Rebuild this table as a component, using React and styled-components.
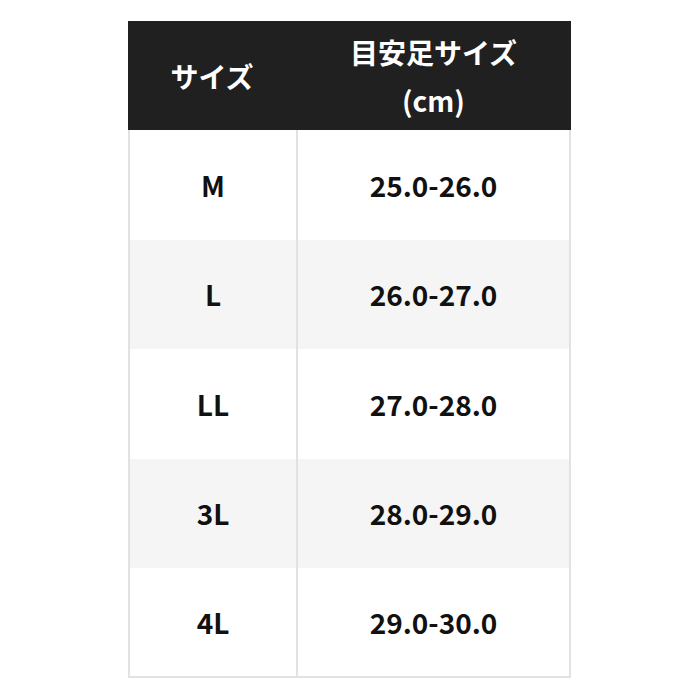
import React from "react";
import styled, { createGlobalStyle } from "styled-components";

const GlobalStyle = createGlobalStyle`
  html, body {
    margin: 0;
    padding: 0;
    background: #ffffff;
  }
  body {
    font-family: "Noto Sans CJK JP", "Noto Sans", sans-serif;
  }
`;

const Page = styled.div`
  width: 700px;
  height: 700px;
  display: flex;
  justify-content: flex-start;
  padding: 21px 0 0 128px;
  box-sizing: border-box;
`;

const Table = styled.div`
  width: 443px;
  display: grid;
  grid-template-columns: 168px 1fr;
  grid-template-rows: 109px;
  grid-auto-rows: 109.5px;
`;

const HeadCell = styled.div`
  background-color: #202020;
  color: #ffffff;
  font-size: 28px;
  font-weight: 700;
  line-height: 48px;
  display: flex;
  align-items: center;
  justify-content: center;
  text-align: center;
`;

const Cell = styled.div`
  box-sizing: border-box;
  display: flex;
  align-items: center;
  justify-content: center;
  font-size: 28px;
  font-weight: 700;
  color: #111111;
  background-color: ${({ $shade }) => ($shade ? "#f5f5f5" : "#ffffff")};
  border-left: 2px solid #e2e2e2;
  border-right: ${({ $last }) => ($last ? "2px solid #e2e2e2" : "none")};
  border-bottom: ${({ $bottom }) => ($bottom ? "2px solid #e2e2e2" : "none")};
`;

const rows = [
  ["M", "25.0-26.0"],
  ["L", "26.0-27.0"],
  ["LL", "27.0-28.0"],
  ["3L", "28.0-29.0"],
  ["4L", "29.0-30.0"],
];

const App = () => {
  return (
    <>
      <GlobalStyle />
      <Page>
        <Table>
          <HeadCell>サイズ</HeadCell>
          <HeadCell>
            目安足サイズ
            <br />
            (cm)
          </HeadCell>
          {rows.map(([size, range], i) => {
            const shade = i % 2 === 1;
            const bottom = i === rows.length - 1;
            return (
              <React.Fragment key={size}>
                <Cell $shade={shade} $bottom={bottom}>
                  {size}
                </Cell>
                <Cell $shade={shade} $bottom={bottom} $last>
                  {range}
                </Cell>
              </React.Fragment>
            );
          })}
        </Table>
      </Page>
    </>
  );
};

export default App;
